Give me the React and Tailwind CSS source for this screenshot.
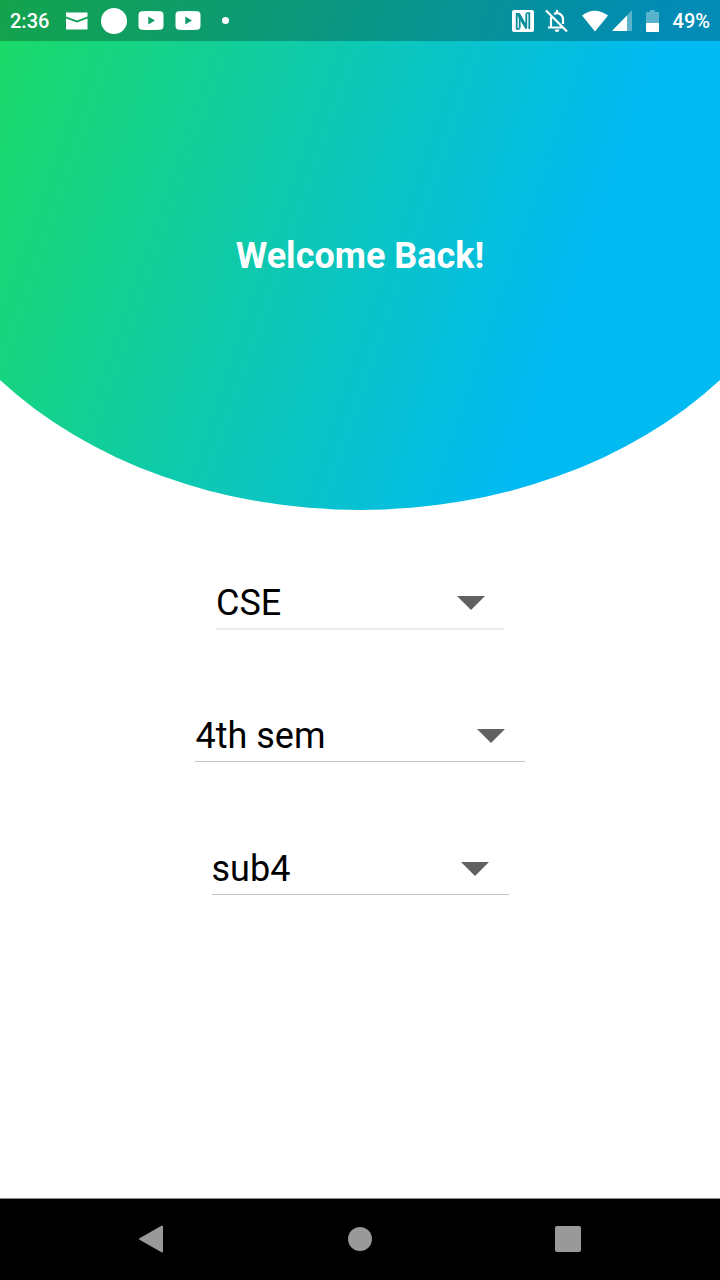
const fields = [
  { label: "CSE", box: "w-[288px] mt-[71px]", line: "border-b-2 border-[#ebebeb]", pad: "pr-[19.500px] pb-[4px] h-[47px]" },
  { label: "4th sem", box: "w-[330px] mt-[84px]", line: "border-b border-[#c4c4c4]", pad: "pr-[20.500px] pb-[4px] pl-[0.500px] h-[47px]" },
  { label: "sub4", box: "w-[297px] mt-[85px]", line: "border-b border-[#c4c4c4]", pad: "pr-[20px] pb-[4px] h-[47px]" },
];

function Video() {
  return (
    <svg className="h-[19px] w-[26px]" viewBox="0 0 26 19">
      <path fill="#fff" fillRule="evenodd" d="M4 .3Q13-.3 22 .3Q25.5.5 25.5 4V15Q25.5 18.5 22 18.7Q13 19.3 4 18.7Q.5 18.5.5 15V4Q.5.5 4 .3ZM10.300 5.600V13.400L17 9.500Z" />
    </svg>
  );
}

function StatusBar() {
  return (
    <header className="flex h-[41px] items-center bg-black/25 pr-[10px] pl-[10px] text-[20px] font-medium text-white">
      <span className="w-[55px] pt-[1px] leading-[41px]">2:36</span>
      <svg className="h-[18px] w-[24px]" viewBox="0 0 24 18">
        <path fill="#fff" d="M1 0.500H22.500V4.500L12 8.500L1 4.500ZM1 6.500L12 10.500L22.500 6.500V17.500H1Z" />
      </svg>
      <div className="ml-[12px] size-[26px] rounded-full bg-white" />
      <div className="ml-[11px]"><Video /></div>
      <div className="ml-[11px]"><Video /></div>
      <div className="ml-[21px] size-[7px] rounded-full bg-white" />
      <svg className="mr-[1px] ml-auto h-[22px] w-[22px]" viewBox="0 0 22 22">
        <rect width="22" height="22" rx="2" fill="#fff" />
        <path d="M4.700 3V18.800H7.500M17.300 19V3.200H14.500M7.700 18.500V5L14.300 17V3.500" fill="none" stroke="#078d9d" strokeWidth="1.800" strokeLinejoin="round" />
        <path d="M4 3H7.500L14.800 16V19H13.500L6 6.500Z" fill="#078d9d" />
      </svg>
      <svg className="ml-[10px] h-[24px] w-[24px]" viewBox="0 0 24 24" fill="none" stroke="#fff" strokeWidth="2.200">
        <path d="M1 1.500L22 22.500M6 8V18M3 18.500H18M9 5Q12 3.400 15 5Q18 7 18 10V15M12 1V4" />
        <path d="M9.500 20.500H14.500Q14 23 12 23Q10 23 9.500 20.500Z" fill="#fff" stroke="none" />
      </svg>
      <svg className="ml-[12px] h-[22px] w-[28px]" viewBox="0 0 28 22">
        <path fill="#fff" d="M1 5.500Q13.500-4 27 5.500L14 21.500Z" />
      </svg>
      <svg className="ml-[3px] h-[21px] w-[20px]" viewBox="0 0 20 21">
        <path fill="#fff" fillOpacity=".35" d="M0 21L20 0V21Z" />
        <path fill="#fff" d="M0 21L15 5.500V21Z" />
      </svg>
      <svg className="ml-[14px] h-[22px] w-[13px]" viewBox="0 0 13 22">
        <path fill="#fff" fillOpacity=".35" d="M0 3Q0 2 1 2H4V0H9V2H12Q13 2 13 3V13H0Z" />
        <path fill="#fff" d="M0 13H13V21Q13 22 12 22H1Q0 22 0 21Z" />
      </svg>
      <span className="ml-[14px] pt-[1px] leading-[41px]">49%</span>
    </header>
  );
}

export default function App() {
  return (
    <div className="flex h-[1280px] w-[720px] flex-col bg-white font-[Roboto,sans-serif]">
      <section className="h-[510px] bg-[linear-gradient(109deg,#1bda65_0px,#02baf2_634px)] [clip-path:path('M0_0H720V380A468_360_0_0_1_0_380Z')]">
        <StatusBar />
        <h1 className="mt-[194px] text-center text-[36px] leading-[42px] font-bold text-white">Welcome Back!</h1>
      </section>
      <main className="flex flex-1 flex-col items-center">
        {fields.map((f) => (
          <div key={f.label} className={`${f.box} ${f.line}`}>
            <button className={`flex w-full items-center justify-between text-left text-[36px] leading-[42px] text-black ${f.pad}`}>
              <span>{f.label}</span>
              <svg className="h-[14px] w-[28px]" viewBox="0 0 28 14"><path fill="#616161" d="M0 0H28L14 14Z" /></svg>
            </button>
          </div>
        ))}
      </main>
      <nav className="flex h-[82px] items-center justify-between border-t border-[#8b8b8b] bg-black pr-[139px] pb-[1px] pl-[138px]">
        <svg className="h-[28px] w-[26px]" viewBox="0 0 26 28"><path fill="#999" stroke="#999" strokeWidth="2" strokeLinejoin="round" d="M2 14L24 1.500V26.500Z" /></svg>
        <div className="size-[24px] rounded-full bg-[#999]" />
        <div className="size-[26px] rounded-[2px] bg-[#999]" />
      </nav>
    </div>
  );
}
